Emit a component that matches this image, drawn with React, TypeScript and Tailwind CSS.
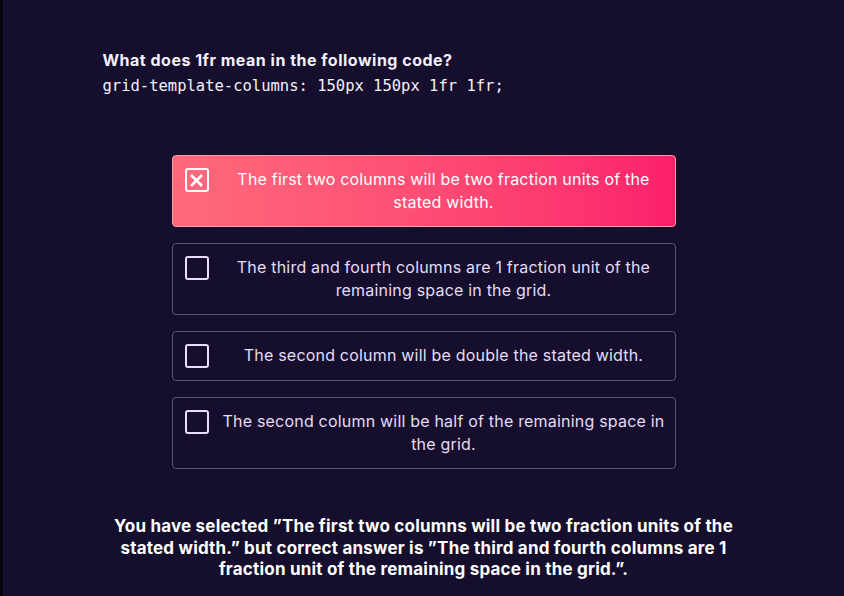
import React from "react";

type Option = { id: number; text: string };

const options: Option[] = [
  { id: 1, text: "The first two columns will be two fraction units of the stated width." },
  { id: 2, text: "The third and fourth columns are 1 fraction unit of the remaining space in the grid." },
  { id: 3, text: "The second column will be double the stated width." },
  { id: 4, text: "The second column will be half of the remaining space in the grid." },
];

const selectedId = 1;
const correctId = 2;

function CheckBox({ checked }: { checked: boolean }) {
  return (
    <div
      className={`w-6 h-6 shrink-0 rounded-[3px] border-2 flex items-center justify-center ${
        checked ? "border-white" : "border-[#e9dcfa]"
      }`}
    >
      {checked && (
        <svg width="13" height="13" viewBox="0 0 13 13">
          <path d="M2 2 L11 11 M11 2 L2 11" stroke="#ffffff" strokeWidth="2.8" strokeLinecap="square" />
        </svg>
      )}
    </div>
  );
}

export default function App() {
  const selected = options.find((o) => o.id === selectedId)!;
  const correct = options.find((o) => o.id === correctId)!;

  return (
    <div className="w-[844px] h-[596px] flex bg-[#150f2d] overflow-hidden" style={{ fontFamily: "Inter, 'Noto Sans', sans-serif" }}>
      {/* thin dark rail on the left */}
      <div className="w-[3px] shrink-0 bg-[#06050f]" />

      <div className="flex-1">
        <div className="w-[642px] mx-auto pt-[48px]">
          <h2 className="text-[16px] leading-[24px] font-bold tracking-[0.5px] text-[#f4f0fb]">
            What does 1fr mean in the following code?
          </h2>
          <code
            className="block mt-[1px] text-[15.5px] leading-[26px] text-[#f4f0fb]"
            style={{ fontFamily: "'DejaVu Sans Mono', monospace" }}
          >
            grid-template-columns: 150px 150px 1fr 1fr;
          </code>
        </div>

        {/* answer options */}
        <div className="w-[504px] mx-auto mt-[56px] flex flex-col gap-4">
          {options.map((o) => {
            const isSel = o.id === selectedId;
            return (
              <div
                key={o.id}
                className={`flex items-start gap-[14px] px-3 py-3 rounded-[4px] border ${
                  isSel
                    ? "bg-gradient-to-r from-[#ff6a7b] to-[#fb1e6c] border-[#ff9aa9] text-white"
                    : "border-[#5b5474] text-[#e6dcf6]"
                }`}
              >
                <CheckBox checked={isSel} />
                <p className="flex-1 -mr-[2px] text-center text-[16px] leading-[23px] tracking-[0.2px]">{o.text}</p>
              </div>
            );
          })}
        </div>

        <p className="w-[660px] mx-auto mt-[47px] text-center font-bold text-[17px] leading-[21.5px] tracking-[0.2px] text-white">
          You have selected ”{selected.text}” but correct answer is ”{correct.text}”.
        </p>
      </div>
    </div>
  );
}
